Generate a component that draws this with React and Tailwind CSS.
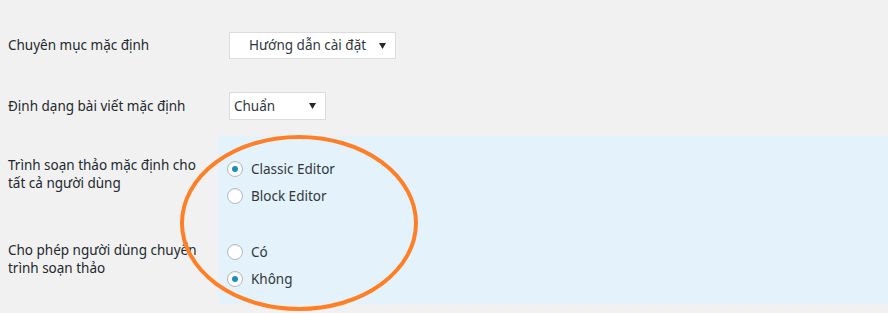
import React from "react";

function Arrow() {
  return (
    <svg width="7" height="6" viewBox="0 0 7 6" className="shrink-0">
      <path d="M0 0 H7 L3.5 6 Z" fill="#23282d" />
    </svg>
  );
}

function Select({ text, width, padLeft }) {
  return (
    <div
      className={`flex items-center justify-between border border-[#dcdcde] bg-white pr-[9px] text-[13.5px] text-[#32373c] ${width} ${padLeft}`}
    >
      <span>{text}</span>
      <Arrow />
    </div>
  );
}

function Radio({ checked, label }) {
  return (
    <div className="flex h-[24px] items-center gap-[8px]">
      <span className="flex h-[16px] w-[16px] items-center justify-center rounded-full border border-[#b4b9be] bg-white shadow-[inset_0_1px_2px_rgba(0,0,0,0.07)]">
        {checked && <span className="h-[6px] w-[6px] rounded-full bg-[#1e8cbe]" />}
      </span>
      <span className="text-[13.5px] text-[#32373c]">{label}</span>
    </div>
  );
}

export default function App() {
  return (
    <div
      className="relative h-[313px] w-[888px] overflow-hidden bg-[#f1f1f1] text-[#23282d]"
      style={{ fontFamily: '"Noto Sans", "Open Sans", sans-serif' }}
    >
      <div className="pt-[32px]">
        <div className="flex h-[27px] items-center">
          <div className="w-[229px] pl-[8px] text-[13.5px]">Chuyên mục mặc định</div>
          <Select text="Hướng dẫn cài đặt" width="h-[27px] w-[167px]" padLeft="pl-[19px]" />
        </div>
        <div className="mt-[33px] flex h-[28px] items-center">
          <div className="w-[229px] pl-[8px] text-[13.5px]">Định dạng bài viết mặc định</div>
          <Select text="Chuẩn" width="h-[28px] w-[97px]" padLeft="pl-[4px]" />
        </div>
        <div className="mt-[16px]">
          <div className="flex h-[83px]">
            <div className="w-[218px] pl-[8px] pt-[20px] text-[13.5px] leading-[18px]">
              Trình soạn thảo mặc định cho
              <br />
              tất cả người dùng
            </div>
            <div className="flex flex-1 flex-col gap-[3px] bg-[#e3f2fb] pl-[9px] pt-[21px]">
              <Radio checked label="Classic Editor" />
              <Radio label="Block Editor" />
            </div>
          </div>
          <div className="flex h-[85px]">
            <div className="w-[218px] pl-[8px] pt-[22px] text-[13.5px] leading-[18px]">
              Cho phép người dùng chuyển
              <br />
              trình soạn thảo
            </div>
            <div className="flex flex-1 flex-col gap-[3px] bg-[#e3f2fb] pl-[9px] pt-[21px]">
              <Radio label="Có" />
              <Radio checked label="Không" />
            </div>
          </div>
        </div>
      </div>
      <svg
        className="pointer-events-none absolute left-[176px] top-[131px]"
        width="248"
        height="186"
        viewBox="0 0 248 186"
      >
        <ellipse cx="123" cy="92" rx="117" ry="86" fill="none" stroke="#ff7f27" strokeWidth="4" />
      </svg>
    </div>
  );
}
